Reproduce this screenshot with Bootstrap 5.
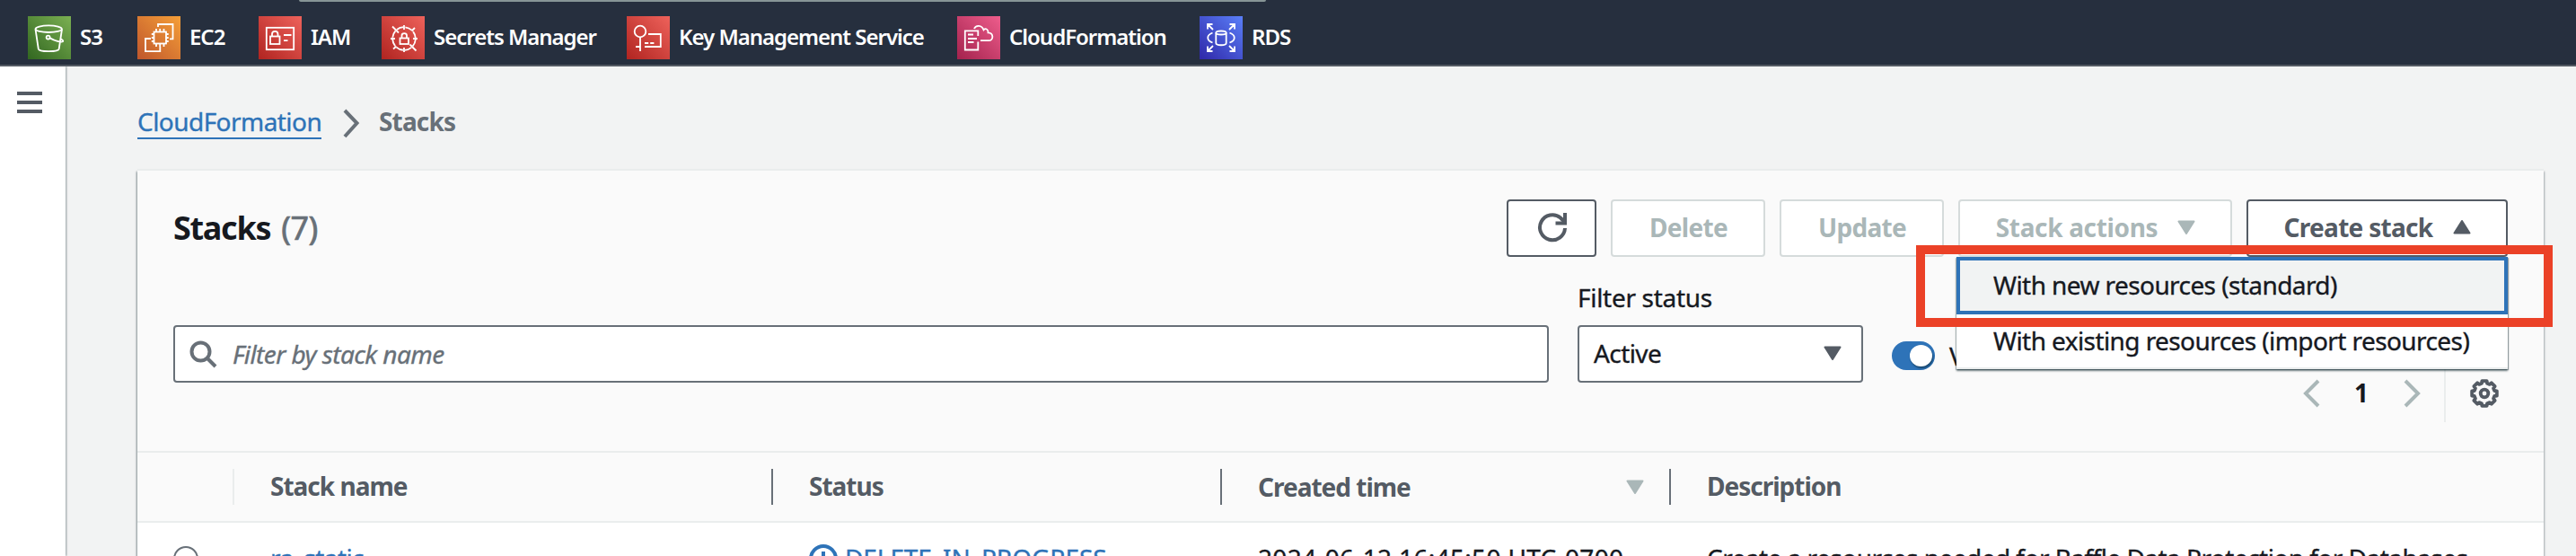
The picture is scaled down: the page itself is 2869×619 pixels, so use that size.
<!DOCTYPE html>
<html lang="en">
<head>
<meta charset="utf-8">
<title>CloudFormation - Stacks</title>
<link href="https://cdn.jsdelivr.net/npm/bootstrap@5.3.0/dist/css/bootstrap.min.css" rel="stylesheet">
<style>
html,body{height:619px;overflow:hidden}
body{background:#f2f3f3;font-family:"Noto Sans","Open Sans",sans-serif;font-size:28px;line-height:40px;color:#16191f;letter-spacing:-.58px;white-space:nowrap;-webkit-text-stroke:.35px}
svg{display:block;flex:none}
.topbar{height:74px;background:#262f3e;border-bottom:2px solid #545b64;padding:10px 0 0 31px;position:relative}
.topstrip{position:absolute;left:333px;top:0;width:1077px;height:2px;background:#879596;border-radius:0 0 3px 3px}
.favs{display:grid;grid-template-columns:122px 135px 137px 273px 368px 270px 150px;font-size:24px;font-weight:600;letter-spacing:-1.02px;color:#fff;height:64px;align-items:center;-webkit-text-stroke:0}
.favs a,.favs a:hover{color:#fff;text-decoration:none;display:flex;align-items:center;gap:10px}
.favs span{margin-top:-3px}
.favs svg{fill:none;stroke:#fff;stroke-width:1.8}
.side{width:73px;height:545px;background:#fff;box-shadow:1px 0 2px rgba(0,28,36,.4);padding:28px 0 0 19px;flex:none}
.side i{display:block;width:28px;height:4px;background:#545b64;margin-bottom:6px}
.shell{height:545px;overflow:hidden}
.content{padding:42px 35px 0 80px;flex:1;min-width:0}
.crumbs{height:40px;letter-spacing:-.55px}
.crumbs .up{color:#2e73b8!important;text-decoration:none;border-bottom:2px solid #2e73b8;height:39px;line-height:38px;width:205px}
.crumbs b{color:#687078;letter-spacing:-.85px;line-height:38px}
b,.act,.title,.hrow{-webkit-text-stroke:0}
.panel{margin-top:34px;background:#fafafa;height:480px;width:2680px;box-shadow:0 -2px 0 #eaeded,-1px 1px 2px rgba(0,28,36,.45),1px 1px 2px rgba(0,28,36,.3)}
.tools{padding:32px 40px 32px;height:312px}
.title{font-size:36px;font-weight:700;line-height:64px;letter-spacing:-1.3px;margin:0}
.title span{font-weight:400;color:#687078;letter-spacing:-.6px;margin-left:4px;-webkit-text-stroke:.7px}
.act{height:64px;border:2px solid #d5dbdb;border-radius:4px;background:#fff;color:#aab7b8;font-weight:700;display:flex;align-items:center;justify-content:center;letter-spacing:-.7px;line-height:56px;padding:0 0 2px 1px}
.act.on{border-color:#545b64;color:#545b64}
.fieldbox{height:64px;border:2px solid #687078;border-radius:4px;background:#fff;display:flex;align-items:center}
.switch{width:48px;height:32px;border-radius:16px;background:#2e73b8;padding:4px 3px 4px 20px}
.switch i{display:block;width:25px;height:24px;border-radius:50%;background:#fff;box-shadow:1px 2px 2px rgba(0,28,36,.5)}
.options{position:absolute;z-index:5;right:0;top:64px;width:614px;height:125px;background:#fff;border-bottom:2px solid #eaeded;box-shadow:0 2px 2px rgba(0,28,36,.5),-1px 1px 1px rgba(0,28,36,.2),1px 1px 1px rgba(0,28,36,.3)}
.options div{height:64px;padding-left:41px;line-height:62px}
.options .cur{border:4px solid #2e73b8;background:#f1f3f3;padding-left:37px;line-height:54px}
.options div+div{line-height:58px}
.marker{position:absolute;z-index:6;right:-50px;top:51px;width:709px;height:91px;border:10px solid #eb4127}
.hrow{height:80px;border-top:2px solid #eaeded;border-bottom:2px solid #eaeded;padding-top:18px;display:grid;grid-template-columns:108px 600px 500px 500px 1fr}
.hrow div{height:40px;line-height:38px;border-right:2px solid #687078;padding-left:40px;font-weight:700;color:#545b64;letter-spacing:-1px}
.hrow div:first-child{border-right-color:#eaeded}
.hrow div:last-child{border:0}
.brow{background:#fff;height:78px;display:grid;grid-template-columns:148px 600px 500px 500px 1fr;line-height:78px}
.rad{width:28px;height:28px;border:2px solid #687078;border-radius:50%;margin:26px 0 0 40px}
.lnk{color:#2e73b8}
</style>
<script src="https://cdn.jsdelivr.net/npm/bootstrap@5.3.0/dist/js/bootstrap.bundle.min.js"></script>
</head>
<body>
<svg width="0" height="0" class="position-absolute"><defs>
<linearGradient id="gG" x1="0" y1="1" x2="1" y2="0"><stop stop-color="#316620"/><stop offset="1" stop-color="#7bb052"/></linearGradient>
<linearGradient id="gO" x1="0" y1="1" x2="1" y2="0"><stop stop-color="#bf562c"/><stop offset="1" stop-color="#f59f38"/></linearGradient>
<linearGradient id="gR" x1="0" y1="1" x2="1" y2="0"><stop stop-color="#b02420"/><stop offset="1" stop-color="#ee625b"/></linearGradient>
<linearGradient id="gP" x1="0" y1="1" x2="1" y2="0"><stop stop-color="#a3224d"/><stop offset="1" stop-color="#ee5d8c"/></linearGradient>
<linearGradient id="gB" x1="0" y1="1" x2="1" y2="0"><stop stop-color="#2f27a8"/><stop offset="1" stop-color="#5a7ff8"/></linearGradient>
</defs></svg>
<header class="topbar">
 <div class="topstrip"></div>
 <nav class="favs">
  <a><svg width="48" height="48"><rect width="48" height="48" fill="url(#gG)" stroke="none"/><ellipse cx="23.2" cy="14.2" rx="14.7" ry="3.8"/><path d="M8.5 14.5 11.8 36.5C12.5 40 34 40 34.7 36.5L38 14.5"/><circle cx="22.6" cy="23.6" r="2"/><path d="M24.6 24.4C30 27.5 37 29.5 39 28.3 39.8 27.3 38.5 26.3 36.6 25.2"/></svg><span>S3</span></a>
  <a><svg width="48" height="48"><rect width="48" height="48" fill="url(#gO)" stroke="none"/><rect x="18.5" y="17.5" width="13.5" height="13"/><path d="M21 17.5V14M25.2 17.5V14M29.5 17.5V14M21 30.5V34M25.2 30.5V34M29.5 30.5V34M18.5 20H15.8M18.5 24H15.8M18.5 28H15.8M32 20H34.7M32 24H34.7M32 28H34.7M23 12V9H39.5V25.3H36M15 25H9V39.2H25.3V34"/></svg><span>EC2</span></a>
  <a><svg width="48" height="48"><rect width="48" height="48" fill="url(#gR)" stroke="none"/><rect x="8.8" y="12.8" width="30.4" height="24.4"/><rect x="13" y="22.5" width="10.5" height="8.5"/><path d="M15 22.5V20C15 15.7 21.5 15.7 21.5 20V22.5M28 21H36.5M28 27.2H32.5"/></svg><span>IAM</span></a>
  <a><svg width="48" height="48"><rect width="48" height="48" fill="url(#gR)" stroke="none"/><circle cx="25" cy="25" r="12.8" stroke-dasharray="8.05 2" stroke-dashoffset="9"/><rect x="20.5" y="24.5" width="9.5" height="6.5"/><path d="M22.5 24.5V21.5C22.5 18.3 28 18.3 28 21.5V24.5M25 10V15M25 35V40M10 25H15M35 25H40M12 11.5 19 18.5M37 13 33.5 16.5M13 36.5 16.5 33.5M31.5 31.5 38.5 38.5"/></svg><span>Secrets Manager</span></a>
  <a><svg width="48" height="48"><rect width="48" height="48" fill="url(#gR)" stroke="none"/><circle cx="15" cy="17" r="6.3"/><path d="M15 23.5V39M10 34H15M24 20H37.8V34H20M20 30H24.2M26.2 30H30.4"/></svg><span>Key Management Service</span></a>
  <a><svg width="48" height="48"><rect width="48" height="48" fill="url(#gP)" stroke="none"/><path d="M23.3 22V16.3H8.8V37.5H23.3V28.5M12 20.5H18M12 25H22M12 29H18.5M19 14C20.5 9.8 27.5 9.3 29.5 15.3 32 12.8 34.8 15 34.5 18.3 41 18.8 40.8 27 35 27.2H26"/></svg><span>CloudFormation</span></a>
  <a><svg width="48" height="48"><rect width="48" height="48" fill="url(#gB)" stroke="none"/><ellipse cx="24" cy="18.5" rx="5.7" ry="2"/><path d="M18.3 18.5V30C18.3 33 29.7 33 29.7 30V18.5M9 14.5V9H14.5M9 9 15 15M33.5 9H39V14.5M39 9 33 15M9 33.5V39H14.5M9 39 15 33M39 33.5V39H33.5M39 39 33 33M14.5 18.5C7.5 21 7.5 27 14.5 29.5M33.5 18.5C40.5 21 40.5 27 33.5 29.5"/></svg><span>RDS</span></a>
 </nav>
</header>
<div class="d-flex shell">
 <aside class="side"><i></i><i></i><i></i></aside>
 <main class="content">
  <nav class="crumbs d-flex"><a class="up" href="#">CloudFormation</a><svg class="ms-4 mt-1" width="20" height="34" style="margin-right:20px"><path d="M2 3 15.5 17 2 32" fill="none" stroke="#687078" stroke-width="4"/></svg><b>Stacks</b></nav>
  <section class="panel">
   <div class="tools d-flex flex-column justify-content-between">
    <div class="d-flex justify-content-between">
     <h1 class="title">Stacks <span>(7)</span></h1>
     <div class="d-flex position-relative" style="gap:16px">
      <div class="act on" style="width:100px"><svg width="34" height="34" viewBox="0 0 34 34" fill="none" stroke="#545b64" stroke-width="4"><path d="M31 18A14 14 0 1 1 26 6.5L31 11.5" /><path d="M31 1V12.5H20.5"/></svg></div>
      <div class="act" style="width:172px">Delete</div>
      <div class="act" style="width:183px">Update</div>
      <div class="act" style="width:305px;gap:22px;letter-spacing:-.35px">Stack actions<svg width="20" height="16"><path d="M1.5 1.5H18.5L10 15Z" fill="#aab7b8" stroke="#aab7b8" stroke-width="2" stroke-linejoin="round"/></svg></div>
      <div class="act on" style="width:291px;gap:23px">Create stack<svg width="20" height="16"><path d="M1.5 14.5H18.5L10 1Z" fill="#545b64" stroke="#545b64" stroke-width="2" stroke-linejoin="round"/></svg></div>
      <div class="options"><div class="cur">With new resources (standard)</div><div>With existing resources (import resources)</div></div>
      <div class="marker"></div>
     </div>
    </div>
    <div class="d-flex align-items-end">
     <div class="fieldbox" style="width:1532px;margin-bottom:44px;padding-left:16px;gap:17px"><svg width="31" height="31" fill="none" stroke="#687078" stroke-width="4"><circle cx="12.5" cy="12.5" r="10"/><path d="M19.5 19.5 29 29"/></svg><em style="color:#687078">Filter by stack name</em></div>
     <div style="width:318px;margin:0 0 44px 32px"><div style="letter-spacing:-.3px;margin-bottom:11px">Filter status</div>
      <div class="fieldbox justify-content-between" style="padding:0 22px 2px 16px"><span>Active</span><svg width="20" height="16"><path d="M1.5 1.5H18.5L10 15Z" fill="#545b64" stroke="#545b64" stroke-width="2" stroke-linejoin="round"/></svg></div></div>
     <div class="d-flex align-items-center" style="width:300px;margin:0 0 54px 32px;gap:16px"><div class="switch"><i></i></div><span>V</span></div>
     <div class="d-flex align-items-center ms-auto" style="height:64px"><svg width="20" height="32" fill="none" stroke="#aab7b8" stroke-width="4"><path d="M17 2 3 16 17 30"/></svg><b style="width:18px;margin:-2px 36px 0 37px;line-height:60px">1</b><svg width="20" height="32" fill="none" stroke="#aab7b8" stroke-width="4"><path d="M3 2 17 16 3 30"/></svg>
      <div style="width:2px;height:64px;background:#eaeded;margin:0 27px 0 26px"></div>
      <svg width="32" height="32" viewBox="-16 -16 32 32" fill="none" stroke="#545b64" stroke-width="3.8" style="margin-right:10px" id="gear"><circle r="4.3"/></svg></div>
    </div>
   </div>
   <div class="hrow"><div></div><div>Stack name</div><div>Status</div><div class="d-flex justify-content-between align-items-center" style="padding-right:28px">Created time<svg width="20" height="16"><path d="M1.5 1.5H18.5L10 15Z" fill="#aab7b8" stroke="#aab7b8" stroke-width="2" stroke-linejoin="round"/></svg></div><div>Description</div></div>
   <div class="brow"><div><div class="rad"></div></div><div class="lnk">ra_static</div><div class="lnk d-flex" style="letter-spacing:-.1px;gap:8px"><svg width="32" height="32" fill="none" stroke="#2e73b8" stroke-width="4" style="margin-top:24px"><circle cx="16" cy="16" r="14"/><path d="M16 8V18M16 20V24" /></svg>DELETE_IN_PROGRESS</div><div style="letter-spacing:.33px">2024-06-12 16:45:50 UTC-0700</div><div style="letter-spacing:-.53px">Create a resources needed for Baffle Data Protection for Databases</div></div>
  </section>
 </main>
</div>
<script>
// Eight-toothed outline of the preferences gear
let d='';
for(let k=0;k<8;k++){const a=k*45;for(const [o,r] of [[-11,14.1],[11,14.1],[15,11.6],[30,11.6]]){const t=(a+o)*Math.PI/180;d+=(d?'L':'M')+(r*Math.cos(t)).toFixed(2)+' '+(r*Math.sin(t)).toFixed(2)}}
const p=document.createElementNS('http://www.w3.org/2000/svg','path');p.setAttribute('d',d+'Z');p.setAttribute('stroke-linejoin','round');document.getElementById('gear').append(p);
</script>
</body>
</html>
